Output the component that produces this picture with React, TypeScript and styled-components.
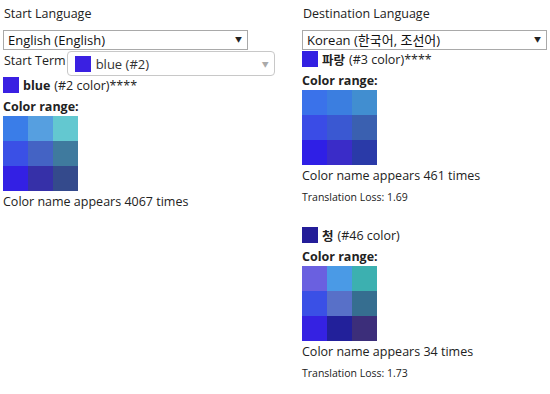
import styled, { createGlobalStyle } from "styled-components"

const GlobalStyle = createGlobalStyle`
    body {
        margin: 0;
        background: #fff;
        color: #222;
        font-family: "Open Sans", "Noto Sans CJK KR", sans-serif;
        font-size: 12.5px;
    }
`

type Term = {
    name: string
    rank: number
    swatch: string
    stars?: boolean
    range: string[]
    count: number
    loss?: number
}

const startTerm: Term = {
    name: "blue",
    rank: 2,
    swatch: "#3a20e2",
    stars: true,
    range: [
        "#3a7de8", "#569fe0", "#63c8d0",
        "#3a50e6", "#4463c4", "#3f7a9e",
        "#3320e4", "#3630a8", "#344a8c",
    ],
    count: 4067,
}

const destTerms: Term[] = [
    {
        name: "파랑",
        rank: 3,
        swatch: "#3220e2",
        stars: true,
        range: [
            "#3a72ea", "#3b7ee0", "#418ed0",
            "#3a4ce6", "#3a58d2", "#3a60b0",
            "#2f1fe6", "#3a2cc8", "#2a3aa8",
        ],
        count: 461,
        loss: 1.69,
    },
    {
        name: "청",
        rank: 46,
        swatch: "#241d99",
        range: [
            "#6a60e0", "#4a9ae6", "#3cb0b0",
            "#3a50e6", "#5870c8", "#366e90",
            "#3522e2", "#22209a", "#3c2e7a",
        ],
        count: 34,
        loss: 1.73,
    },
]

const TermInfo = ({ term }: { term: Term }) => (
    <InfoBlock>
        <TitleRow>
            <Swatch $color={term.swatch} />
            <b>{term.name}</b>
            <span>(#{term.rank} color){term.stars ? "****" : ""}</span>
        </TitleRow>
        <RangeLabel>Color range:</RangeLabel>
        <RangeGrid>
            {term.range.map((c, i) => (
                <Cell key={i} $color={c} />
            ))}
        </RangeGrid>
        <Line>Color name appears {term.count} times</Line>
        {term.loss !== undefined && <Loss>Translation Loss: {term.loss}</Loss>}
    </InfoBlock>
)

const App = () => {
  return (
    <Page>
        <GlobalStyle />
        <Column>
            <Heading>Start Language</Heading>
            <NativeSelect>
                <span>English (English)</span>
                <Arrow>▼</Arrow>
            </NativeSelect>
            <TermRow>
                <TermLabel>Start Term</TermLabel>
                <Combo>
                    <Swatch $color={startTerm.swatch} />
                    <ComboValue>blue (#2)</ComboValue>
                    <Chevron>▼</Chevron>
                </Combo>
            </TermRow>
            <TermInfo term={startTerm} />
        </Column>
        <Column>
            <Heading>Destination Language</Heading>
            <NativeSelect>
                <span>Korean (한국어, 조선어)</span>
                <Arrow>▼</Arrow>
            </NativeSelect>
            {destTerms.map(t => (
                <TermInfo key={t.name} term={t} />
            ))}
        </Column>
    </Page>
  )
}

export default App

const Page = styled.div`
    display: grid;
    grid-template-columns: 299px 245px;
    padding: 0 3px;
`

const Column = styled.div`
    display: flex;
    flex-direction: column;
    align-items: flex-start;
`

const Heading = styled.div`
    line-height: 20px;
    margin: 4px 0 6px 1px;
`

const NativeSelect = styled.div`
    box-sizing: border-box;
    display: flex;
    align-items: center;
    justify-content: space-between;
    width: 245px;
    height: 20px;
    padding: 0 5px 0 4px;
    border: 1px solid #a9a9a9;
    background: #fff;
    color: #111;
    font-size: 13px;
    line-height: 18px;
`

const Arrow = styled.span`
    font-size: 7px;
    color: #222;
`

const TermRow = styled.div`
    display: flex;
    align-items: flex-start;
    gap: 1px;
    margin-top: 1px;
    padding-left: 1px;
`

const TermLabel = styled.span`
    line-height: 20px;
`

const Combo = styled.div`
    box-sizing: border-box;
    display: flex;
    align-items: center;
    width: 208px;
    height: 25px;
    padding: 0 5px 0 7px;
    border: 1px solid #c8c8c8;
    border-radius: 4px;
    gap: 5px;
`

const ComboValue = styled.span`
    flex: 1;
    color: #333;
    font-size: 13px;
`

const Chevron = styled.span`
    font-size: 7px;
    color: #aaa;
`

const InfoBlock = styled.div`
    display: flex;
    flex-direction: column;
    align-items: flex-start;
    margin-top: 1px;
    margin-bottom: 22px;
`

const TitleRow = styled.div`
    display: flex;
    align-items: center;
    gap: 4px;
    height: 16px;

    b {
        font-weight: 700;
    }
`

const Swatch = styled.span<{ $color: string }>`
    display: inline-block;
    width: 16px;
    height: 16px;
    background: ${p => p.$color};
`

const RangeLabel = styled.div`
    font-weight: 700;
    line-height: 18px;
    margin-top: 5px;
`

const RangeGrid = styled.div`
    display: grid;
    grid-template-columns: repeat(3, 25px);
    grid-auto-rows: 25px;
`

const Cell = styled.div<{ $color: string }>`
    background: ${p => p.$color};
`

const Line = styled.div`
    line-height: 20px;
    margin-top: 1px;
`

const Loss = styled.div`
    font-size: 10.5px;
    line-height: 14px;
    margin-top: 4px;
`
